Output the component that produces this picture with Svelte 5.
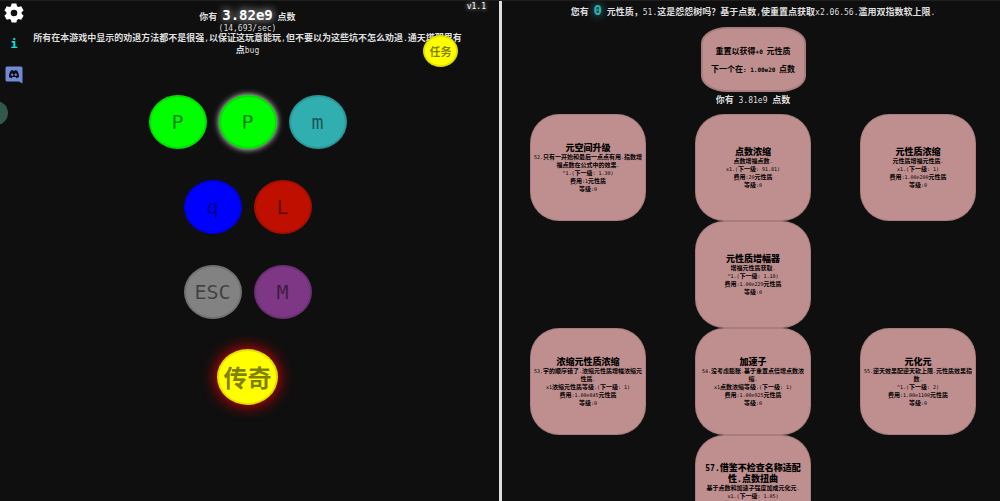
<script>
  const nodeRows = [
    [
      { label: 'P', kind: 'lime' },
      { label: 'P', kind: 'lime active' },
      { label: 'm', kind: 'teal' }
    ],
    [
      { label: 'q', kind: 'blue' },
      { label: 'L', kind: 'red' }
    ],
    [
      { label: 'ESC', kind: 'gray' },
      { label: 'M', kind: 'purple' }
    ],
    [{ label: '传奇', kind: 'legend' }]
  ];

  const upgradeRows = [
    [
      { title: '元空间升级', lines: ['52.只有一开始和最后一点点有用.指数增福点数在公式中的效果.', '^1.(下一级: 1.30)', '费用:1元性质', '等级:0'] },
      { title: '点数浓缩', lines: ['点数增福点数.', 'x1.(下一级: 91.81)', '费用:20元性质', '等级:0'] },
      { title: '元性质浓缩', lines: ['元性质增福元性质.', 'x1.(下一级: 1)', '费用:1.00e200元性质', '等级:0'] }
    ],
    [
      { title: '元性质增幅器', lines: ['增福元性质获取.', '^1.(下一级: 1.18)', '费用:1.00e229元性质', '等级:0'] }
    ],
    [
      { title: '浓缩元性质浓缩', lines: ['53.字的顺序错了.浓缩元性质增幅浓缩元性质.', 'x1浓缩元性质等级.(下一级: 1)', '费用:1.00e845元性质', '等级:0'] },
      { title: '加速子', lines: ['54.没考虑膨胀.基于重置点倍增点数浓缩.', 'x1点数浓缩等级.(下一级: 1)', '费用:1.00e925元性质', '等级:0'] },
      { title: '元化元', lines: ['55.逆天效果配逆天软上限.元性质效果指数.', '^1.(下一级: 2)', '费用:1.00e1100元性质', '等级:0'] }
    ],
    [
      { title: '57.借鉴不检查名称适配性.点数扭曲', lines: ['基于点数和加速子强度加成元化元.', 'x1.(下一级: 1.05)', '费用:1.00e1250元性质', '等级:0'] }
    ]
  ];

  // Splits mixed text so that Latin runs can take the monospace face.
  const runs = (text) =>
    (text.match(/[\x20-\x7e]+|[^\x20-\x7e]+/g) ?? []).map((value) => ({
      value,
      latin: /^[\x20-\x7e]/.test(value)
    }));
</script>

{#snippet mixed(text)}{#each runs(text) as run}{#if run.latin}<span class="mono">{run.value}</span>{:else}{run.value}{/if}{/each}{/snippet}

<div class="game">
  <section class="pane tree">
    <nav class="tools">
      <button class="tool" aria-label="设置">
        <svg width="20" height="20" viewBox="0 0 20 20">
          <path fill="#fff" fill-rule="evenodd" d="M7.6 0.5h4.8l.6 2.7 1.5.9 2.7-.8 2.4 4.1-2 1.9v1.5l2 1.9-2.4 4.1-2.7-.8-1.5.9-.6 2.7H7.6l-.6-2.7-1.5-.9-2.7.8L.4 12.7l2-1.9V9.3l-2-1.9 2.4-4.1 2.7.8 1.5-.9zM10 6.7a3.3 3.3 0 1 0 0 6.6a3.3 3.3 0 0 0 0-6.6z" />
        </svg>
      </button>
      <button class="tool info">i</button>
      <a class="tool" href="#discord" aria-label="Discord">
        <svg width="18" height="18" viewBox="0 0 18 18">
          <path fill="#7289da" d="M2 .5h14a1.5 1.5 0 0 1 1.5 1.5v15.5L14 15.5H2A1.5 1.5 0 0 1 .5 14V2A1.5 1.5 0 0 1 2 .5z" />
          <path fill="#0f0f0f" d="M5.5 5q1-.8 2.2-.9l.4.7h1.8l.4-.7q1.2.1 2.2.9 1.7 2.8 1.5 6-1.3 1.1-2.6 1.2l-.8-1.1H7.4l-.8 1.1Q5.3 12.1 4 11q-.2-3.2 1.5-6z" />
          <ellipse cx="7.2" cy="8.7" rx="1.1" ry="1.2" fill="#7289da" />
          <ellipse cx="10.8" cy="8.7" rx="1.1" ry="1.2" fill="#7289da" />
        </svg>
      </a>
    </nav>
    <button class="handle" aria-label="菜单"><span>✦</span></button>
    <span class="version mono">v1.1</span>
    <button class="node quest">任务</button>

    <header class="summary">
      <p class="points">你有<span class="mono">&nbsp;</span><strong class="mono">3.82e9</strong><span class="mono">&nbsp;</span>点数</p>
      <p class="rate">{@render mixed('(14,693/sec)')}</p>
      <p class="intro">{@render mixed('所有在本游戏中显示的劝退方法都不是很强,以保证这玩意能玩,但不要以为这些坑不怎么劝退.通天塔那里有点bug')}</p>
    </header>

    <div class="nodes">
      {#each nodeRows as row}
        <div class="node-row">
          {#each row as node}
            <button class="node {node.kind}">{node.label}</button>
          {/each}
        </div>
      {/each}
    </div>
  </section>

  <section class="pane layer">
    <p class="resource">您有<span class="mono">&nbsp;</span><strong class="mono">0</strong><span class="mono">&nbsp;</span>{@render mixed('元性质，51.这是怨怨树吗？基于点数,使重置点获取x2.06.56.滥用双指数软上限.')}</p>
    <button class="reset">
      <span>{@render mixed('重置以获得+0 元性质')}</span>
      <span>{@render mixed('下一个在: 1.00e20 点数')}</span>
    </button>
    <p class="have">{@render mixed('你有 3.81e9 点数')}</p>

    <div class="upgrades">
      {#each upgradeRows as row}
        <div class="upgrade-row">
          {#each row as item}
            <button class="upgrade">
              <b>{@render mixed(item.title)}</b>
              {#each item.lines as line}
                <span class="line">{@render mixed(line)}</span>
              {/each}
            </button>
          {/each}
        </div>
      {/each}
    </div>
  </section>
</div>

<style>
  :global(body) {
    margin: 0;
    background: #0f0f0f;
  }

  .game {
    display: grid;
    grid-template-columns: 1fr 1fr;
    height: 100vh;
    box-sizing: border-box;
    border-top: 1px solid #1f1f1f;
    color: #dfdfdf;
    font: 700 9px/12px 'Noto Sans CJK SC', sans-serif;
    text-align: center;
  }

  p {
    margin: 0;
  }

  button {
    margin: 0;
    font-family: inherit;
    cursor: pointer;
  }

  .mono {
    font-family: 'DejaVu Sans Mono', monospace;
    font-size: 8px;
    font-weight: 400;
    line-height: 1;
    white-space: pre-wrap;
  }

  .pane {
    position: relative;
    min-width: 0;
    overflow: hidden auto;
    scrollbar-width: none;
  }

  .tree {
    border-right: 3px solid #dfdfdf;
    margin-right: -2px;
  }

  .layer {
    display: flex;
    flex-direction: column;
    align-items: center;
    padding-left: 6px;
  }

  .tools {
    position: absolute;
    top: 2px;
    left: 4px;
    display: flex;
    flex-direction: column;
    gap: 11px;
  }

  .tool {
    display: grid;
    place-items: center;
    width: 20px;
    height: 20px;
    padding: 0;
    border: 0;
    background: none;
  }

  .tool svg {
    display: block;
  }

  .info {
    color: #00e5e5;
    font: bold 12px 'DejaVu Sans Mono', monospace;
  }

  .handle {
    position: absolute;
    top: 100px;
    left: -16px;
    width: 24px;
    height: 24px;
    padding: 0 0 0 16px;
    border: 0;
    border-radius: 50%;
    background: #30594e;
    color: #48504d;
    font-size: 7px;
    line-height: 24px;
    text-align: left;
  }

  .version {
    position: absolute;
    top: 2px;
    right: 13px;
    color: #fff;
    text-shadow: 0 0 4px #fff;
  }

  .summary {
    padding: 7px 34px 0 30px;
  }

  .points {
    height: 16px;
    line-height: 16px;
  }

  .points strong.mono {
    color: #fff;
    font-size: 14px;
    font-weight: 700;
    text-shadow: 0 0 8px #fff;
  }

  .rate {
    height: 8px;
    line-height: 8px;
  }

  .nodes {
    display: flex;
    flex-direction: column;
    gap: 31px;
    padding: 39px 4px 0 0;
  }

  .node-row {
    display: flex;
    justify-content: center;
    align-items: center;
    gap: 12px;
    height: 54px;
  }

  .node {
    box-sizing: border-box;
    width: 58px;
    height: 54px;
    padding: 0;
    border: 2px solid rgb(0 0 0 / 12.5%);
    border-radius: 50%;
    color: rgb(0 0 0 / 50%);
    font: 20px/24px 'DejaVu Sans Mono', 'Noto Sans CJK SC', monospace;
  }

  .lime {
    background-color: #0f0;
  }

  .active {
    box-shadow: 0 0 6px #fff;
  }

  .teal {
    background-color: #31aeb0;
  }

  .blue {
    background-color: #00f;
  }

  .red {
    background-color: #bf0f00;
  }

  .gray {
    background-color: #828282;
  }

  .purple {
    background-color: #7d3785;
  }

  .legend,
  .quest {
    background-color: #ff0;
    font-family: 'Noto Sans CJK SC', sans-serif;
    font-weight: 700;
  }

  .legend {
    width: 61px;
    height: 56px;
    box-shadow: 0 0 16px #f00;
    font-size: 24px;
  }

  .quest {
    position: absolute;
    z-index: 1;
    top: 34px;
    right: 41px;
    width: 35px;
    height: 32px;
    font-size: 11px;
  }

  .resource {
    padding-top: 2px;
    line-height: 18px;
  }

  .resource strong.mono {
    color: #31aeb0;
    font-size: 14px;
    font-weight: 700;
    text-shadow: 0 0 8px #31aeb0;
  }

  .reset {
    box-sizing: border-box;
    display: flex;
    flex-direction: column;
    justify-content: center;
    gap: 6px;
    width: 105px;
    min-height: 65px;
    margin-top: 6px;
    padding: 0;
    border: 2px solid rgb(0 0 0 / 12.5%);
    border-radius: 25%;
    background-color: #bf8f8f;
    color: #000;
    font-size: 8px;
    font-weight: 700;
    line-height: 12px;
  }

  .reset .mono {
    font-size: 6px;
    font-weight: 700;
  }

  .have {
    margin-top: 2px;
    line-height: 12px;
  }

  .upgrades {
    display: flex;
    flex-direction: column;
    padding-top: 8px;
  }

  .upgrade-row {
    display: flex;
    justify-content: center;
    gap: 49px;
  }

  .upgrade {
    box-sizing: border-box;
    display: flex;
    flex-direction: column;
    justify-content: center;
    width: 116px;
    min-height: 107px;
    padding: 0 2px;
    border: 1px solid rgb(0 0 0 / 12.5%);
    border-radius: 29px;
    background-color: #bf8f8f;
    color: #000;
    font-size: 6px;
    font-weight: 700;
    line-height: 8px;
  }

  .upgrade .mono {
    font-size: 5px;
  }

  .upgrade b {
    padding: 0 6px;
    font-size: 9px;
    line-height: 11px;
  }

  .upgrade b .mono {
    font-size: 8px;
    font-weight: 700;
  }
</style>
